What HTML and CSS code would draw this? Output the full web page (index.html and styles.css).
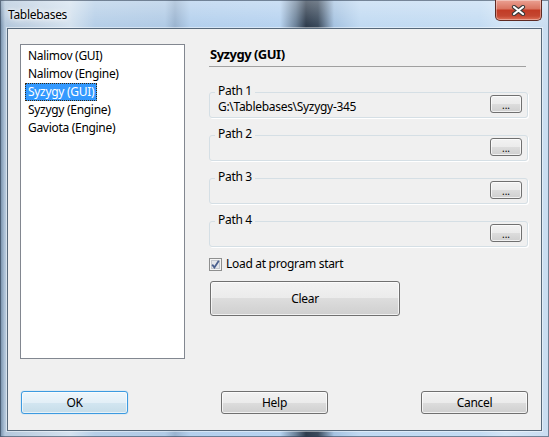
FILE: index.html
```html
<!DOCTYPE html>
<html lang="en">
<head>
    <meta charset="UTF-8">
    <meta name="viewport" content="width=device-width, initial-scale=1.0">
    <title>Tablebases</title>
    <link rel="stylesheet" href="styles.css">
</head>
<body>

    <div class="window">
        <div class="titlebar">
            <span class="title">Tablebases</span>
            <button class="close-btn" aria-label="Close">
                <svg width="15" height="11" viewBox="0 0 15 11">
                    <path d="M3 2 L12 9 M12 2 L3 9" stroke="#3a3a3a" stroke-width="4.2" stroke-linecap="round"/>
                    <path d="M3 2 L12 9 M12 2 L3 9" stroke="#ffffff" stroke-width="2.2" stroke-linecap="round"/>
                </svg>
            </button>
        </div>

        <div class="client">
            <div class="main">
                <ul class="tree">
                    <li>Nalimov (GUI)</li>
                    <li>Nalimov (Engine)</li>
                    <li class="selected">Syzygy (GUI)</li>
                    <li>Syzygy (Engine)</li>
                    <li>Gaviota (Engine)</li>
                </ul>

                <div class="panel">
                    <h2 class="panel-title">Syzygy (GUI)</h2>

                    <div class="group">
                        <span class="group-label">Path 1</span>
                        <span class="group-value">G:\Tablebases\Syzygy-345</span>
                        <button class="btn browse">...</button>
                    </div>
                    <div class="group">
                        <span class="group-label">Path 2</span>
                        <span class="group-value"></span>
                        <button class="btn browse">...</button>
                    </div>
                    <div class="group">
                        <span class="group-label">Path 3</span>
                        <span class="group-value"></span>
                        <button class="btn browse">...</button>
                    </div>
                    <div class="group">
                        <span class="group-label">Path 4</span>
                        <span class="group-value"></span>
                        <button class="btn browse">...</button>
                    </div>

                    <label class="check-row">
                        <span class="checkbox">
                            <svg width="13" height="13" viewBox="0 0 13 13">
                                <rect x="0.5" y="0.5" width="12" height="12" fill="#f4f4f4" stroke="#8e8f8f"/>
                                <rect x="2.5" y="2.5" width="8" height="8" fill="#e4e6ea" stroke="#c4c8cf"/>
                                <path d="M3.2 6.6 L5.4 9.4 L9.8 2.8" fill="none" stroke="#4a5f8e" stroke-width="1.8"/>
                            </svg>
                        </span>
                        Load at program start
                    </label>

                    <button class="btn clear">Clear</button>
                </div>
            </div>

            <div class="actions">
                <button class="btn default">OK</button>
                <button class="btn">Help</button>
                <button class="btn">Cancel</button>
            </div>
        </div>
    </div>

</body>
</html>
```

FILE: styles.css
```css
body {
    margin: 0;
    padding: 0;
    font-family: "Noto Sans", "Open Sans", sans-serif;
    font-size: 12px;
    letter-spacing: -0.3px;
    color: #000;
}

/* glass frame round the dialog */
.window {
    width: 549px;
    height: 437px;
    box-sizing: border-box;
    padding: 0 7px 6px 7px;
    display: flex;
    flex-direction: column;
    background:
        linear-gradient(to bottom, rgba(255, 255, 255, 0.3), rgba(255, 255, 255, 0) 26px),
        linear-gradient(to right, #6f8aa6 0, #b4c8dc 5px, #c6d6e6 40px, #d4e2ef 70px, #b6cfe8 95px,
            #b1cbe6 165px, #9ab4d0 175px, #b4d0ed 190px, #b7d3f0 280px, #6a8097 296px,
            #2e3c4d 306px, #3a4a5c 318px, #a6c3e1 334px, #c1daf2 360px, #c4dcf3 480px,
            #d3e5f6 505px, #c9ddf1 549px);
    box-shadow: inset 0 0 0 1px rgba(40, 55, 75, 0.55);
}

.titlebar {
    height: 28px;
    display: flex;
    align-items: flex-start;
}

.title {
    margin-top: 6px;
    margin-left: 1px;
    line-height: 18px;
    text-shadow: 0 0 6px #fff, 0 0 10px #fff, 0 0 3px rgba(255, 255, 255, 0.9);
}

.close-btn {
    margin-left: auto;
    width: 47px;
    height: 21px;
    padding: 0;
    border: 1px solid #5e2a22;
    border-top: none;
    border-radius: 0 0 5px 5px;
    background: linear-gradient(to bottom, #eba193 0%, #d9735f 45%, #c23b25 50%, #c44731 80%, #e0735a 100%);
    box-shadow: inset 0 0 0 1px rgba(255, 255, 255, 0.35);
    display: flex;
    align-items: center;
    justify-content: center;
}

.client {
    flex: 1;
    background-color: #f0f0f0;
    border: 1px solid #56687a;
    box-shadow: 0 0 0 1px rgba(255, 255, 255, 0.45);
    padding: 15px 13px 0 12px;
}

.main {
    display: flex;
    height: 315px;
    gap: 24px;
}

/* tree of tablebase kinds */
.tree {
    list-style: none;
    margin: 0;
    padding: 2px 0 0 4px;
    width: 165px;
    box-sizing: border-box;
    background: #fff;
    border: 1px solid #828790;
}

.tree li {
    width: fit-content;
    height: 18px;
    line-height: 16px;
    padding: 0 2px;
    border: 1px solid transparent;
    box-sizing: border-box;
    white-space: nowrap;
}

.tree li.selected {
    background-color: #3399ff;
    color: #fff;
    border: 1px dotted #3a2a10;
}

.panel {
    flex: 1;
    display: flex;
    flex-direction: column;
}

.panel-title {
    margin: 0 2px 8px 0;
    padding: 0 0 2px 1px;
    font-size: 13px;
    font-weight: bold;
    letter-spacing: -0.5px;
    line-height: 20px;
    border-bottom: 1px solid #a0a0a0;
}

.group {
    margin-top: 17px;
    display: grid;
    grid-template-columns: 1fr 32px;
    border: 1px solid #d5dfe5;
    border-radius: 3px;
    padding: 0 5px 2px 5px;
    box-shadow: 1px 1px 0 #fff;
}

.group-label {
    grid-column: 1;
    grid-row: 1;
    justify-self: start;
    margin-top: -10px;
    padding: 0 3px;
    line-height: 16px;
    background-color: #f0f0f0;
}

.group-value {
    grid-column: 1;
    grid-row: 2;
    padding-left: 3px;
    line-height: 16px;
    min-height: 16px;
    white-space: nowrap;
}

.btn {
    font-family: inherit;
    font-size: 12px;
    letter-spacing: inherit;
    color: #000;
    padding: 0;
    border: 1px solid #707070;
    border-radius: 3px;
    background: linear-gradient(to bottom, #f2f2f2 0%, #ebebeb 50%, #dddddd 50%, #cfcfcf 100%);
    box-shadow: inset 0 0 0 1px rgba(255, 255, 255, 0.7);
}

.browse {
    grid-column: 2;
    grid-row: 1 / span 2;
    align-self: start;
    margin-top: 2px;
    width: 32px;
    height: 18px;
    line-height: 14px;
    font-size: 10px;
    letter-spacing: 0;
    padding-top: 2px;
}

.check-row {
    margin-top: 9px;
    display: flex;
    align-items: center;
    gap: 4px;
    line-height: 16px;
}

.checkbox {
    display: flex;
    width: 13px;
    height: 13px;
}

.clear {
    margin-top: 9px;
    margin-left: 1px;
    align-self: flex-start;
    width: 190px;
    height: 35px;
}

.actions {
    margin-top: 32px;
    padding-left: 1px;
    display: flex;
    justify-content: space-between;
}

.actions .btn {
    width: 107px;
    height: 23px;
}

.actions .default {
    border-color: #3c9ae0;
    background: linear-gradient(to bottom, #eef6fb 0%, #e3eff7 50%, #d3e6f1 50%, #c6dde9 100%);
    box-shadow: inset 0 0 0 1px rgba(255, 255, 255, 0.6), 0 0 1px #5fb4ee;
}
```
